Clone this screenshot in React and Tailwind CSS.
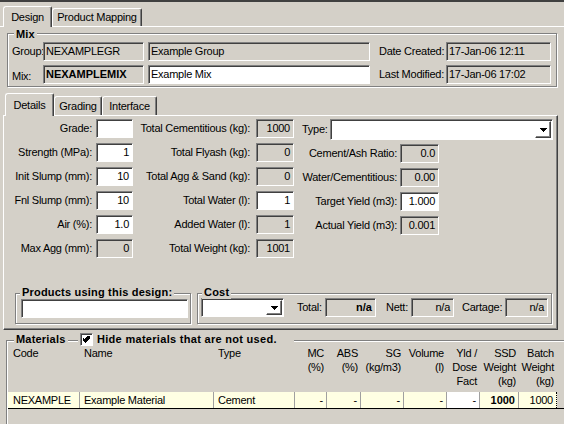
import React from 'react';

const sunk =
  'border border-t-[#808080] border-l-[#808080] border-b-white border-r-white shadow-[inset_1px_1px_0_#404040]';
const raised =
  'border border-t-white border-l-white border-b-[#404040] border-r-[#404040] shadow-[inset_-1px_-1px_0_#808080]';
const etched = 'border border-[#808080] shadow-[inset_1px_1px_0_#fff,1px_1px_0_#fff]';
const tabBase =
  'flex items-center justify-center bg-[#d4d0c8] border-t border-l border-r border-t-white border-l-white border-r-[#404040] shadow-[inset_-1px_0_0_#808080] rounded-tl-[3px] rounded-tr-[2px] whitespace-nowrap';

function Field({ className = '', white, bold, left, children }) {
  return (
    <div
      className={`${sunk} ${white ? 'bg-white' : 'bg-[#d4d0c8]'} h-[19px] flex items-center whitespace-nowrap overflow-hidden ${
        left ? 'pl-[2px]' : 'justify-end pr-[3px]'
      } ${bold ? 'font-bold tracking-normal' : ''} ${className}`}
    >
      {children}
    </div>
  );
}

function Combo({ className = '' }) {
  return (
    <div className={`${sunk} bg-white flex justify-end p-[1px] ${className}`}>
      <div className={`${raised} w-[16px] h-full flex items-center justify-center`}>
        <svg width="7" height="4" viewBox="0 0 7 4" shapeRendering="crispEdges">
          <path d="M0 0h7v1h-1v1h-1v1h-1v1h-1v-1h-1v-1h-1v-1h-1z" fill="#000" />
        </svg>
      </div>
    </div>
  );
}

function GroupLabel({ className = '', children }) {
  return (
    <div className={`absolute bg-[#d4d0c8] px-[2px] font-bold tracking-[0.2px] whitespace-nowrap ${className}`}>
      {children}
    </div>
  );
}

const leftRows = [
  ['Grade:', '', true],
  ['Strength (MPa):', '1', true],
  ['Init Slump (mm):', '10', true],
  ['Fnl Slump (mm):', '10', true],
  ['Air (%):', '1.0', true],
  ['Max Agg (mm):', '0', false],
];

const midRows = [
  ['Total Cementitious (kg):', '1000', false],
  ['Total Flyash (kg):', '0', false],
  ['Total Agg & Sand (kg):', '0', false],
  ['Total Water (l):', '1', true],
  ['Added Water (l):', '1', false],
  ['Total Weight (kg):', '1001', false],
];

const rightRows = [
  ['Cement/Ash Ratio:', '0.0', false],
  ['Water/Cementitious:', '0.00', false],
  ['Target Yield (m3):', '1.000', true],
  ['Actual Yield (m3):', '0.001', false],
];

const cols = [
  { w: 'w-[72px]', head: ['Code'], left: true, val: 'NEXAMPLE' },
  { w: 'w-[134px]', head: ['Name'], left: true, val: 'Example Material' },
  { w: 'w-[81px]', head: ['Type'], left: true, val: 'Cement' },
  { w: 'w-[32px]', head: ['MC', '(%)'], val: '-' },
  { w: 'w-[34px]', head: ['ABS', '(%)'], val: '-' },
  { w: 'w-[43px]', head: ['SG', '(kg/m3)'], val: '-' },
  { w: 'w-[43px]', head: ['Volume', '(l)'], val: '-' },
  { w: 'w-[33px]', head: ['Yld /', 'Dose', 'Fact'], val: '-', white: true },
  { w: 'w-[39px]', head: ['SSD', 'Weight', '(kg)'], val: '1000', bold: true },
  { w: 'w-[38px]', head: ['Batch', 'Weight', '(kg)'], val: '1000', focus: true },
];

export default function App() {
  return (
    <div className="w-[564px] h-[424px] overflow-hidden bg-[#d4d0c8] text-black text-[11px] leading-[13px] tracking-[-0.25px] font-['Liberation_Sans',Arial,sans-serif]">
      <div className="h-[2px] bg-[#404040]" />

      {/* outer tabs */}
      <div className="flex items-end h-[24px] pl-[3px]">
        <div className={`${tabBase} relative z-10 w-[49px] h-[21px] mb-[-1px]`}>Design</div>
        <div className={`${tabBase} w-[90px] h-[18px]`}>Product Mapping</div>
      </div>

      <div className="border-t border-white">
        {/* Mix group */}
        <div className={`${etched} relative mt-[6px] ml-[7px] w-[550px] h-[54px] pt-[8px]`}>
          <GroupLabel className="left-[6px] top-[-6px]">Mix</GroupLabel>
          <div className="flex items-center h-[19px]">
            <div className="w-[35px] pl-[4px]">Group:</div>
            <Field className="w-[101px]" left>NEXAMPLEGR</Field>
            <Field className="ml-[4px] w-[222px]" left>Example Group</Field>
            <div className="ml-[9px] w-[67px] whitespace-nowrap">Date Created:</div>
            <Field className="w-[105px]" left>17-Jan-06 12:11</Field>
          </div>
          <div className="flex items-center h-[19px] mt-[4px]">
            <div className="w-[35px] pl-[4px] pt-[3px]">Mix:</div>
            <Field className="w-[101px]" left bold>NEXAMPLEMIX</Field>
            <Field className="ml-[4px] w-[222px]" left white>Example Mix</Field>
            <div className="ml-[9px] w-[67px] whitespace-nowrap">Last Modified:</div>
            <Field className="w-[105px]" left>17-Jan-06 17:02</Field>
          </div>
        </div>

        {/* inner tabs */}
        <div className="flex items-end h-[22px] mt-[6px] pl-[5px]">
          <div className={`${tabBase} relative z-10 w-[49px] h-[23px] mb-[-1px]`}>Details</div>
          <div className={`${tabBase} w-[48px] h-[19px]`}>Grading</div>
          <div className={`${tabBase} w-[55px] h-[19px]`}>Interface</div>
        </div>

        <div
          className={`ml-[3px] w-[555px] h-[215px] pt-[3px] border border-t-white border-l-white border-r-[#404040] border-b-[#404040] shadow-[inset_-1px_-1px_0_#808080]`}
        >
          <div className="flex">
            <div className="flex flex-col gap-[5px]">
              {leftRows.map(([l, v, w]) => (
                <div key={l} className="flex items-center h-[19px]">
                  <div className="w-[88px] text-right whitespace-nowrap">{l}</div>
                  <Field className="ml-[4px] w-[37px]" white={w}>{v}</Field>
                </div>
              ))}
            </div>
            <div className="flex flex-col gap-[5px]">
              {midRows.map(([l, v, w]) => (
                <div key={l} className="flex items-center h-[19px]">
                  <div className="w-[117px] text-right whitespace-nowrap">{l}</div>
                  <Field className="ml-[6px] w-[38px]" white={w}>{v}</Field>
                </div>
              ))}
            </div>
            <div className="ml-[8px] flex flex-col">
              <div className="flex items-center h-[21px]">
                <div className="w-[28px]">Type:</div>
                <Combo className="w-[223px] h-[21px]" />
              </div>
              <div className="mt-[4px] flex flex-col gap-[5px]">
                {rightRows.map(([l, v, w]) => (
                  <div key={l} className="flex items-center h-[19px]">
                    <div className="w-[95px] flex justify-end whitespace-nowrap">{l}</div>
                    <Field className="ml-[3px] w-[39px]" white={w}>{v}</Field>
                  </div>
                ))}
              </div>
            </div>
          </div>

          <div className="flex mt-[35px]">
            <div className={`${etched} relative ml-[11px] w-[176px] h-[31px] pt-[5px] pl-[5px]`}>
              <GroupLabel className="left-[4px] top-[-8px]">Products using this design:</GroupLabel>
              <Field className="w-[167px]" white left />
            </div>
            <div className={`${etched} relative ml-[6px] w-[355px] h-[31px] pt-[4px] pl-[3px]`}>
              <GroupLabel className="left-[4px] top-[-8px]">Cost</GroupLabel>
              <div className="flex items-center h-[19px]">
                <Combo className="w-[83px] h-[19px]" />
                <div className="ml-[13px] w-[28px]">Total:</div>
                <Field className="w-[51px]" bold>n/a</Field>
                <div className="ml-[10px] w-[25px]">Nett:</div>
                <Field className="w-[43px]">n/a</Field>
                <div className="ml-[8px] w-[43px]">Cartage:</div>
                <Field className="w-[43px]">n/a</Field>
              </div>
            </div>
          </div>
        </div>

        {/* Materials */}
        <div className={`${etched} relative mt-[10px] ml-[6px] w-[600px] h-[120px] pt-[5px] pl-[1px]`}>
          <GroupLabel className="left-[7px] top-[-8px]">Materials</GroupLabel>
          <div className="absolute left-[71px] top-[-8px] w-[216px] h-[13px] bg-[#d4d0c8] flex items-center pl-[2px]">
            <div className={`${sunk} bg-white w-[13px] h-[13px] flex items-center justify-center`}>
              <svg width="7" height="7" viewBox="0 0 7 7" shapeRendering="crispEdges">
                <path
                  d="M6 0h1v3h-1v1h-1v1h-1v1h-1v1h-1v-1h-1v-1h-1v-1h-1v-3h1v1h1v1h1v-1h1v-1h1v-1h1z"
                  fill="#000"
                />
              </svg>
            </div>
            <div className="ml-[4px] font-bold tracking-[0.3px] whitespace-nowrap">Hide materials that are not used.</div>
          </div>

          <div className="flex h-[42px] leading-[14px]">
            {cols.map((c, i) => (
              <div
                key={i}
                className={`${c.w} flex flex-col ${c.left ? (i === 0 ? 'pl-[5px]' : 'pl-[4px]') : 'items-end pr-[3px]'}`}
              >
                {c.head.map((h) => (
                  <div key={h} className="whitespace-nowrap">{h}</div>
                ))}
              </div>
            ))}
          </div>

          <div className="flex h-[17px] mt-[4px] border-b border-black">
            {cols.map((c, i) => (
              <div
                key={i}
                className={`${c.w} h-full flex items-center whitespace-nowrap overflow-hidden ${
                  c.white ? 'bg-white' : 'bg-[#ffffe3]'
                } ${c.focus ? 'border-r border-dotted border-black' : 'border-r border-[#a0a0a0]'} ${
                  c.left ? (i === 0 ? 'pl-[5px]' : 'pl-[4px]') : 'justify-end pr-[3px]'
                } ${c.bold ? 'font-bold tracking-normal' : ''}`}
              >
                {c.val}
              </div>
            ))}
          </div>
        </div>
      </div>
    </div>
  );
}
